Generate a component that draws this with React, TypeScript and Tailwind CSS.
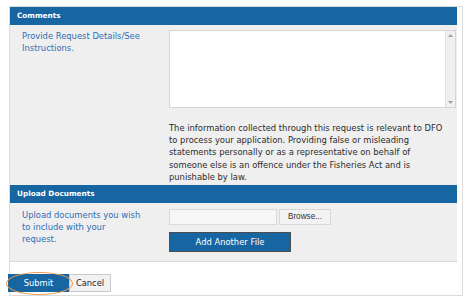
import React from 'react';

const font = { fontFamily: '"DejaVu Sans", Verdana, sans-serif' };

const SectionHeader = ({ title }: { title: string }) => (
  <div className="h-[18px] bg-[#1766a2] pl-[7px] flex items-center text-white font-bold text-[7.3px]">
    {title}
  </div>
);

const FakeTextarea = () => (
  <div className="w-[287px] h-[78px] bg-white border border-[#d6d6d6] flex justify-end">
    <div className="w-[10px] h-full bg-[#f0f0f0] border-l border-[#e2e2e2] flex flex-col items-center justify-between py-[3px]">
      <svg width="5" height="3" viewBox="0 0 5 3">
        <path d="M0 3 L2.5 0 L5 3 Z" fill="#a0a0a0" />
      </svg>
      <svg width="5" height="3" viewBox="0 0 5 3">
        <path d="M0 0 L2.5 3 L5 0 Z" fill="#a0a0a0" />
      </svg>
    </div>
  </div>
);

export default function App() {
  return (
    <div className="w-[468px] h-[302px] bg-white pt-[6px] pl-[9px] overflow-hidden" style={font}>
      <div className="w-[454px] h-[290px] border border-[#dcdcdc] pr-[5px] flex flex-col">
        <SectionHeader title="Comments" />
        <div className="h-[160px] bg-[#efefef] flex pt-[5px]">
          <div className="w-[159px] pl-[12px] text-[8.4px] leading-[12.2px] text-[#2e6db4]">
            Provide Request Details/See
            <br />
            Instructions.
          </div>
          <div className="flex flex-col">
            <FakeTextarea />
            <p className="mt-[14px] text-[8.4px] leading-[12.2px] text-[#2b2b2b] whitespace-nowrap">
              The information collected through this request is relevant to DFO
              <br />
              to process your application. Providing false or misleading
              <br />
              statements personally or as a representative on behalf of
              <br />
              someone else is an offence under the Fisheries Act and is
              <br />
              punishable by law.
            </p>
          </div>
        </div>

        <SectionHeader title="Upload Documents" />
        <div className="h-[59px] bg-[#efefef] border-b border-[#dadada] flex pt-[6px]">
          <div className="w-[159px] pl-[12px] -mt-[0.5px] text-[8.4px] leading-[12px] text-[#2e6db4]">
            Upload documents you wish
            <br />
            to include with your
            <br />
            request.
          </div>
          <div className="flex flex-col">
            <div className="flex gap-[2px]">
              <div className="w-[108px] h-[16px] bg-[#f7f7f7] border border-[#dadada]" />
              <button
                className="w-[52px] h-[16px] bg-[#f3f3f3] border border-[#d8d8d8] text-[8.2px] text-[#333] flex items-center justify-center"
                style={{ fontFamily: '"Liberation Sans", Arial, sans-serif' }}
              >
                Browse...
              </button>
            </div>
            <button className="mt-[7px] w-[122px] h-[20px] bg-[#1766a2] border-[1.5px] border-[#4d4d4d] text-white text-[8.4px] flex items-center justify-center">
              Add Another File
            </button>
          </div>
        </div>

        <div className="flex pt-[12px] -ml-[2px]">
          <div className="relative">
            <button className="w-[61px] h-[18px] bg-[#1766a2] text-white text-[8.3px] flex items-center justify-center">
              Submit
            </button>
            <div className="absolute left-[-2px] top-[-2px] w-[67px] h-[23px] rounded-[50%] border-[1.5px] border-[#f0994a] pointer-events-none" />
          </div>
          <button className="w-[42px] h-[18px] bg-[#f2f2f2] border border-[#c9c9c9] text-[#222] text-[8.3px] flex items-center justify-center">
            Cancel
          </button>
        </div>
      </div>
    </div>
  );
}
